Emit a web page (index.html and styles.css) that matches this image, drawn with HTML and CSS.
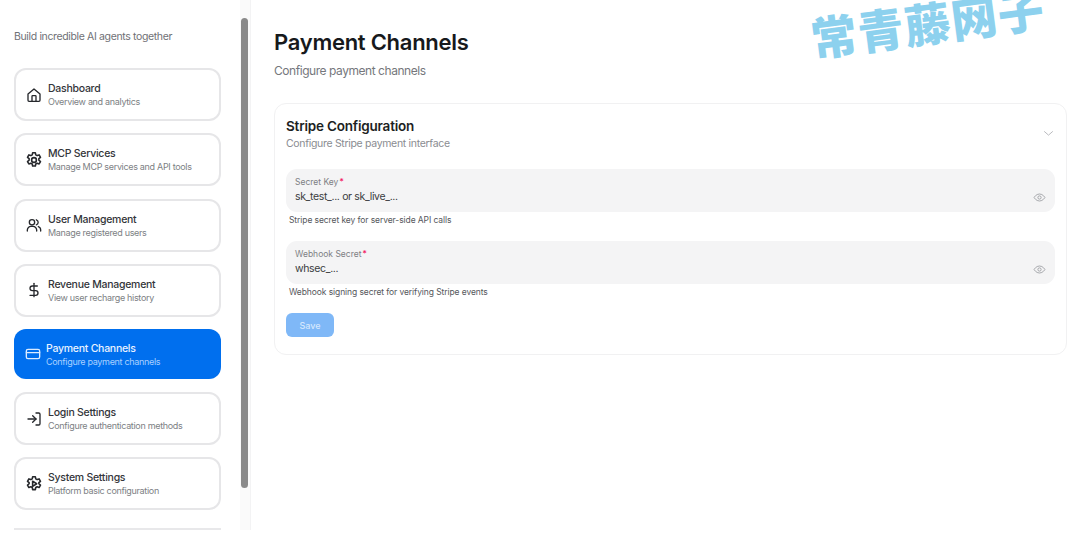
FILE: index.html
```html
<!DOCTYPE html>
<html lang="en">
<head>
<meta charset="utf-8">
<title>Payment Channels</title>
<link rel="stylesheet" href="styles.css">
</head>
<body>
<div class="app">
  <aside class="sidebar">
    <div class="nav-col">
      <p class="tagline">Build incredible AI agents together</p>
      <nav class="nav">
        <a class="item">
          <svg class="ico" viewBox="0 0 24 24"><path d="M3 10.5 12 3l9 7.5V20a1.5 1.5 0 0 1-1.5 1.5h-15A1.5 1.5 0 0 1 3 20z"/><path d="M9 21.500V14a1 1 0 0 1 1-1h4a1 1 0 0 1 1 1v7.500"/></svg>
          <span class="txt"><b>Dashboard</b><small>Overview and analytics</small></span>
        </a>
        <a class="item">
          <svg class="ico" viewBox="2 2 20 20"><path d="M10.300 3h3.400l.5 2.600 1.700.9 2.500-.9 1.700 3-2 1.700v1.900l2 1.700-1.700 3-2.500-.9-1.700.9-.5 2.600h-3.400l-.5-2.600-1.700-.9-2.500.9-1.700-3 2-1.700v-1.900l-2-1.700 1.700-3 2.500.9 1.700-.9z"/><circle cx="12" cy="12" r="3"/></svg>
          <span class="txt"><b>MCP Services</b><small>Manage MCP services and API tools</small></span>
        </a>
        <a class="item">
          <svg class="ico" viewBox="0 0 24 24"><circle cx="9" cy="8" r="4"/><path d="M2 21v-1.500A5.500 5.500 0 0 1 7.500 14h3a5.500 5.500 0 0 1 5.500 5.500V21"/><path d="M15.500 4.200a4 4 0 0 1 0 7.600"/><path d="M18.500 14.300A5.500 5.500 0 0 1 22 19.500V21"/></svg>
          <span class="txt"><b>User Management</b><small>Manage registered users</small></span>
        </a>
        <a class="item">
          <svg class="ico" viewBox="0 0 24 24"><path d="M12 2v20"/><path d="M17 6H9.500a3.500 3.500 0 0 0 0 7h5a3.500 3.500 0 0 1 0 7H6"/></svg>
          <span class="txt"><b>Revenue Management</b><small>View user recharge history</small></span>
        </a>
        <a class="item active">
          <svg class="ico" viewBox="0 0 24 24"><rect x="2" y="5" width="20" height="14" rx="2.500"/><path d="M2 10h20"/></svg>
          <span class="txt"><b>Payment Channels</b><small>Configure payment channels</small></span>
        </a>
        <a class="item">
          <svg class="ico" viewBox="0 0 24 24"><path d="M15 3h4a2 2 0 0 1 2 2v14a2 2 0 0 1-2 2h-4"/><path d="m10 17 5-5-5-5"/><path d="M15 12H3"/></svg>
          <span class="txt"><b>Login Settings</b><small>Configure authentication methods</small></span>
        </a>
        <a class="item">
          <svg class="ico" viewBox="2 2 20 20"><path d="M10.300 3h3.400l.5 2.600 1.700.9 2.500-.9 1.700 3-2 1.700v1.400l2 1.700-1.700 3-2.500-.9-1.700.9-.5 2.600h-3.400l-.5-2.600-1.700-.9-2.500.9-1.700-3 2-1.700v-1.400l-2-1.700 1.700-3 2.500.9 1.700-.9z"/><path d="m10.300 8.500 5 3.200-5 3.300z"/></svg>
          <span class="txt"><b>System Settings</b><small>Platform basic configuration</small></span>
        </a>
      </nav>
      <div class="rule"></div>
    </div>
    <div class="track"><div class="thumb"></div></div>
  </aside>
  <main class="main">
    <h1>Payment Channels</h1>
    <p class="sub">Configure payment channels</p>
    <section class="card">
      <header class="card-head">
        <div>
          <h2>Stripe Configuration</h2>
          <p class="card-sub">Configure Stripe payment interface</p>
        </div>
        <svg class="chev" viewBox="0 0 24 24"><path d="m4 8 8 7 8-7"/></svg>
      </header>
      <div class="field">
        <div class="input">
          <div class="input-txt">
            <span class="lab">Secret Key<i>*</i></span>
            <span class="val">sk_test_... or sk_live_...</span>
          </div>
          <svg class="eye" viewBox="0 0 24 24"><path d="M2 12s3.600-6.500 10-6.500S22 12 22 12s-3.600 6.500-10 6.500S2 12 2 12z"/><circle cx="12" cy="12" r="3"/></svg>
        </div>
        <p class="help">Stripe secret key for server-side API calls</p>
      </div>
      <div class="field">
        <div class="input">
          <div class="input-txt">
            <span class="lab">Webhook Secret<i>*</i></span>
            <span class="val">whsec_...</span>
          </div>
          <svg class="eye" viewBox="0 0 24 24"><path d="M2 12s3.600-6.500 10-6.500S22 12 22 12s-3.600 6.500-10 6.500S2 12 2 12z"/><circle cx="12" cy="12" r="3"/></svg>
        </div>
        <p class="help">Webhook signing secret for verifying Stripe events</p>
      </div>
      <button class="save" type="button">Save</button>
    </section>
  </main>
</div>
<div class="mark">常青藤网子</div>
</body>
</html>
```

FILE: styles.css
```css
* { box-sizing: border-box; }
html, body { margin: 0; height: 100%; overflow: hidden; background: #fff; }
body { font-family: Inter, "Noto Sans", sans-serif; color: #1d1f23; }
p, h1, h2 { margin: 0; }

.app { display: flex; height: 550px; }

.sidebar {
  width: 251px; height: 530px; flex: none;
  display: flex;
  border-right: 1px solid #f3f3f4;
}
.nav-col { width: 240px; padding: 30px 19px 0 14px; flex: none; }
.tagline { font-size: 10.500px; line-height: 14px; color: #6f7176; letter-spacing: -.36px; }
.nav { display: flex; flex-direction: column; margin-top: 24px; }
.item {
  height: 53px; margin-bottom: 12.300px; padding-left: 10px;
  display: flex; align-items: center; gap: 6px;
  border: 2px solid #e6e6e8; border-radius: 12px; background: #fff;
}
.ico {
  width: 16px; height: 16px; flex: none; fill: none; stroke: #26282c;
  stroke-width: 2; stroke-linecap: round; stroke-linejoin: round;
}
.txt { display: flex; flex-direction: column; }
.txt b { margin-top: 1px; font-weight: 500; font-size: 10.500px; line-height: 14px; color: #33353a; letter-spacing: -.26px; }
.txt small { font-size: 9px; line-height: 12px; color: #7d7f84; letter-spacing: -.32px; }
.item.active {
  height: 50px; margin-bottom: 13px; padding-left: 11px; gap: 5px;
  background: #006fee; border: 0;
}
.item.active .ico { stroke: #dcebff; }
.item.active b { color: #e8f2ff; }
.item.active small { color: #a9d0ff; }
.rule { height: 2px; background: #e8e8ea; margin-top: 5px; }

.track { width: 10px; padding: 18px 1px 0; background: #fafafa; }
.thumb { width: 7px; height: 470px; border-radius: 4px; background: #8a8a8a; }

.main { flex: 1; min-width: 0; padding: 28px 13px 0 23px; }
h1 { font-size: 22px; line-height: 28px; font-weight: 600; color: #17191c; letter-spacing: -.27px; }
.sub { margin-top: 7px; font-size: 12px; line-height: 16px; color: #75777c; letter-spacing: -.45px; }
.card {
  margin-top: 24px; height: 252px; padding: 14px 11px 0;
  border: 1px solid #f1f1f2; border-radius: 12px; background: #fff;
}
.card-head { display: flex; justify-content: space-between; align-items: flex-start; height: 35px; margin-bottom: 16px; }
h2 { font-size: 13.500px; line-height: 17px; font-weight: 600; color: #1d1f23; letter-spacing: -.2px; }
.card-sub { margin-top: 1px; font-size: 10.500px; line-height: 15px; color: #8a8c91; letter-spacing: -.32px; }
.chev { width: 13px; height: 13px; margin-top: 9px; fill: none; stroke: #b4b5b9; stroke-width: 1.700; margin-right: 0; }
.field { margin-bottom: 14px; }
.input {
  height: 43px; padding: 7px 9px 0; border-radius: 11px; background: #f4f4f5;
  display: flex; justify-content: space-between; align-items: flex-end;
}
.input-txt { display: flex; flex-direction: column; align-self: flex-start; }
.lab { font-size: 8.500px; line-height: 12px; color: #7d7f84; }
.lab i { font-style: normal; color: #f31260; margin-left: 1px; }
.val { margin-top: 1px; font-size: 10.500px; line-height: 15px; color: #3a3c40; letter-spacing: -.35px; }
.eye { width: 13px; height: 13px; margin: 0 0 8px 0; fill: none; stroke: #9a9ca1; stroke-width: 1.600; }
.help { margin: 2px 0 0 3px; font-size: 8.500px; line-height: 13px; color: #55575c; letter-spacing: -.09px; }
.save {
  display: block; width: 48px; height: 24px; padding: 0; border: 0; border-radius: 6px;
  background: #7fb8f7; color: #d5e7fd; font: 500 9px Inter, sans-serif;
}

.mark {
  position: absolute; left: 811px; top: 12px;
  font-family: "Noto Sans CJK SC", sans-serif; font-weight: 900; font-size: 46px; line-height: 50px;
  letter-spacing: 1px;
  color: #8dd1ee; white-space: nowrap;
  transform: rotate(-7.500deg); transform-origin: left center;
}
```
